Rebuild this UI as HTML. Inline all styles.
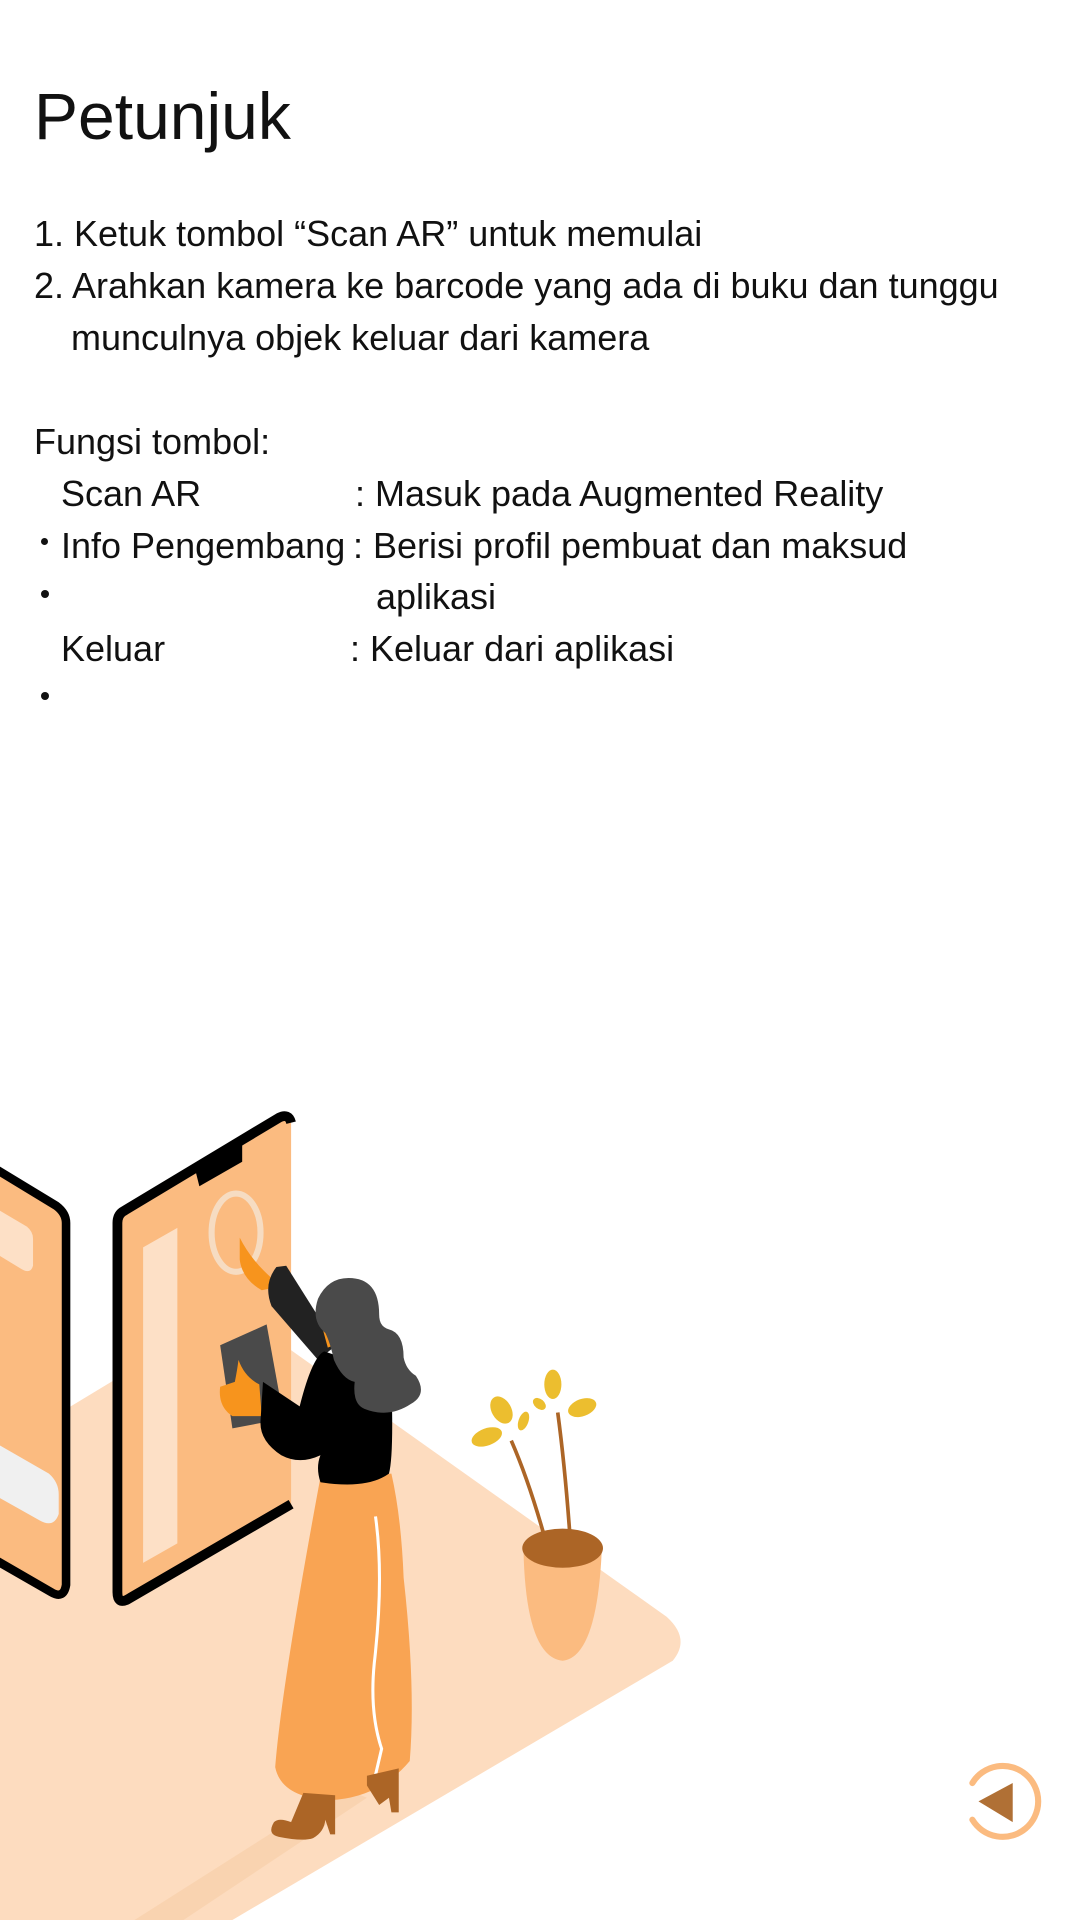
<!DOCTYPE html>
<html><head><meta charset="utf-8"><style>
html,body{margin:0;padding:0;background:#fff;}
body{width:1080px;height:1920px;position:relative;overflow:hidden;font-family:"Liberation Sans",sans-serif;color:#111;}
.t{position:absolute;white-space:nowrap;font-size:36px;line-height:40px;}
h1{position:absolute;left:34px;top:76px;margin:0;font-size:66px;font-weight:normal;line-height:80px;}
.b{position:absolute;left:41px;width:8px;height:8px;border-radius:50%;background:#111;}
svg{position:absolute;left:0;top:0;}
</style></head><body>
<svg width="1080" height="1920" viewBox="0 0 883 1570" preserveAspectRatio="none">
<path d="M0 1185 L190 1070 L545 1322 Q565 1340 550 1358 L190 1570 L0 1570 Z" fill="#fddcbf"/>
<path d="M110 1570 L280 1462 L300 1470 L150 1570 Z" fill="#f9d3b0"/>
<path d="M-10 952 L46 986 Q54 992 54 1000 L54 1296 Q52 1308 42 1302 L-10 1272 Z" fill="#fbbb80" stroke="#000" stroke-width="7" stroke-linejoin="round"/>
<path d="M0 990 L22 1003 Q27 1007 27 1013 L27 1035 Q25 1042 18 1038 L0 1027 Z" fill="#fde0c6"/>
<path d="M0 1182 L40 1205 Q48 1212 48 1222 L48 1238 Q44 1250 32 1243 L0 1225 Z" fill="#f0f0f0"/>
<path d="M98 992 L228 914 Q236 910 238 918 L238 1230 L104 1308 Q96 1312 96 1302 L96 1000 Q96 994 98 992 Z" fill="#fbbb80"/>
<path d="M238 1230 L104 1308 Q96 1312 96 1302 L96 1000 Q96 994 100 991 L228 914 Q236 910 238 918" fill="none" stroke="#000" stroke-width="8" stroke-linejoin="round"/>
<path d="M160 958 L198 935 L198 950 L163 970 Z" fill="#000"/>
<path d="M117 1020 L145 1004 L145 1262 L117 1278 Z" fill="#fde0c6"/>
<ellipse cx="193" cy="1008" rx="20" ry="32" fill="none" stroke="#f6dcc2" stroke-width="5"/>
<path d="M262 1208 Q230 1380 225 1445 Q230 1470 270 1472 Q310 1470 335 1440 Q340 1380 330 1290 Q328 1240 320 1205 Z" fill="#f9a453"/>
<path d="M307 1240 Q314 1290 306 1360 Q302 1400 312 1430 L305 1460" fill="none" stroke="#fff" stroke-width="2.5"/>
<path d="M248 1466 L238 1490 Q228 1486 224 1490 Q218 1500 228 1502 Q248 1506 256 1503 Q265 1498 266 1488 L270 1500 L274 1500 L274 1468 Z" fill="#ac6526"/>
<path d="M300 1460 L310 1476 L318 1470 L320 1482 L326 1482 L326 1446 L300 1452 Z" fill="#ac6526"/>
<path d="M196 1012 Q205 1030 222 1045 L228 1052 L214 1055 Q198 1046 196 1030 Z" fill="#f7941d"/>
<path d="M226 1036 Q215 1050 222 1068 L260 1112 L275 1100 L234 1035 Z" fill="#222"/>
<path d="M262 1080 L273 1070 L278 1098 L268 1102 Z" fill="#f7941d"/>
<path d="M180 1100 L218 1083 L232 1160 L190 1168 Z" fill="#4a4a4a"/>
<path d="M195 1112 Q200 1126 212 1132 L214 1158 L190 1158 Q178 1150 180 1134 L192 1130 Q194 1120 195 1112 Z" fill="#f7941d"/>
<path d="M215 1130 L245 1150 Q255 1110 265 1105 L310 1120 L320 1130 Q322 1190 318 1205 Q300 1218 262 1212 Q258 1200 262 1190 Q245 1198 230 1190 Q212 1178 213 1162 Z" fill="#000"/>
<path d="M285 1045 Q310 1045 310 1075 Q310 1085 318 1087 Q330 1090 330 1110 Q332 1120 340 1125 Q350 1140 336 1148 Q318 1160 298 1152 Q288 1148 290 1130 Q280 1128 273 1112 Q270 1098 266 1090 Q254 1080 260 1062 Q268 1045 285 1045 Z" fill="#4a4a4a"/>
<path d="M445 1256 Q432 1210 418 1178" stroke="#ac6526" stroke-width="3" fill="none"/>
<path d="M466 1256 Q462 1200 456 1155" stroke="#ac6526" stroke-width="3" fill="none"/>
<path d="M428 1268 Q430 1355 460 1358 Q488 1355 492 1268 Z" fill="#fbbb80"/>
<ellipse cx="460" cy="1266" rx="33" ry="16" fill="#ac6526"/>
<g fill="#ecbe2f">
<ellipse cx="410" cy="1153" rx="8" ry="12" transform="rotate(-30 410 1153)"/>
<ellipse cx="398" cy="1175" rx="13" ry="7" transform="rotate(-20 398 1175)"/>
<ellipse cx="428" cy="1162" rx="4" ry="8" transform="rotate(20 428 1162)"/>
<ellipse cx="452" cy="1132" rx="7" ry="12"/>
<ellipse cx="441" cy="1148" rx="6" ry="4" transform="rotate(40 441 1148)"/>
<ellipse cx="476" cy="1151" rx="12" ry="7" transform="rotate(-20 476 1151)"/>
</g>
<path d="M795 1458 A29 29 0 1 1 795 1488" fill="none" stroke="#fbbb80" stroke-width="5" stroke-linecap="round"/>
<path d="M800 1473 L828 1458 L828 1490 Z" fill="#b07035"/>
</svg>
<h1>Petunjuk</h1>
<div class="t" style="left:34px;top:214px">1. Ketuk tombol “Scan AR” untuk memulai</div>
<div class="t" style="left:34px;top:266px">2. Arahkan kamera ke barcode yang ada di buku dan tunggu</div>
<div class="t" style="left:71px;top:318px">munculnya objek keluar dari kamera</div>
<div class="t" style="left:34px;top:422px">Fungsi tombol:</div>
<div class="t" style="left:61px;top:474px">Scan AR</div>
<div class="t" style="left:355px;top:474px">: Masuk pada Augmented Reality</div>
<div class="t" style="left:61px;top:526px">Info Pengembang</div>
<div class="t" style="left:353px;top:526px">: Berisi profil pembuat dan maksud</div>
<div class="t" style="left:376px;top:577px">aplikasi</div>
<div class="t" style="left:61px;top:629px">Keluar</div>
<div class="t" style="left:350px;top:629px">: Keluar dari aplikasi</div>
<div class="b" style="top:538px;width:7px;height:7px"></div>
<div class="b" style="top:590px"></div>
<div class="b" style="top:692px"></div>
</body></html>
